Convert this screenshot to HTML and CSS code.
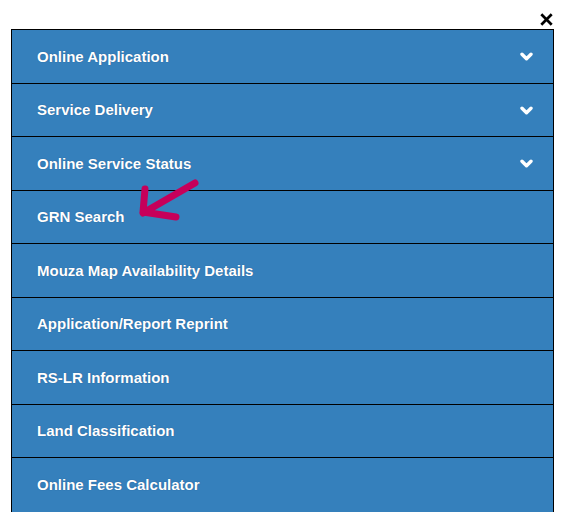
FILE: index.html
```html
<!DOCTYPE html>
<html lang="en">
<head>
<meta charset="utf-8">
<title>Menu</title>
<link rel="stylesheet" href="styles.css">
</head>
<body>
<div class="page">
  <div class="topbar">
    <button class="close" aria-label="Close">
      <svg width="13" height="13" viewBox="0 0 13 13"><path d="M1.3 1.3L11.7 11.7M11.7 1.3L1.3 11.7" stroke="#000" stroke-width="2.7" stroke-linecap="butt"/></svg>
    </button>
  </div>
  <ul class="menu">
    <li class="item"><span>Online Application</span><svg class="chev" width="13" height="10" viewBox="0 0 13 10"><polyline points="2,2.2 6.5,6.7 11,2.2" fill="none" stroke="#fff" stroke-width="3.4" stroke-linecap="round" stroke-linejoin="round"/></svg></li>
    <li class="item"><span>Service Delivery</span><svg class="chev" width="13" height="10" viewBox="0 0 13 10"><polyline points="2,2.2 6.5,6.7 11,2.2" fill="none" stroke="#fff" stroke-width="3.4" stroke-linecap="round" stroke-linejoin="round"/></svg></li>
    <li class="item"><span>Online Service Status</span><svg class="chev" width="13" height="10" viewBox="0 0 13 10"><polyline points="2,2.2 6.5,6.7 11,2.2" fill="none" stroke="#fff" stroke-width="3.4" stroke-linecap="round" stroke-linejoin="round"/></svg></li>
    <li class="item"><span>GRN Search</span></li>
    <li class="item"><span>Mouza Map Availability Details</span></li>
    <li class="item"><span>Application/Report Reprint</span></li>
    <li class="item"><span>RS-LR Information</span></li>
    <li class="item"><span>Land Classification</span></li>
    <li class="item"><span>Online Fees Calculator</span></li>
  </ul>
  <svg class="annot" width="72" height="52" viewBox="129 171 72 52"><path d="M195 183 L143 213 M145 189 L143 212 L176 217" fill="none" stroke="#c6005a" stroke-width="7" stroke-linecap="round" stroke-linejoin="round"/></svg>
</div>
</body>
</html>
```
FILE: styles.css
```css
html, body {
  margin: 0;
  padding: 0;
  background: #fff;
}
.page {
  position: relative;
  width: 561px;
  height: 522px;
  overflow: hidden;
  font-family: "Liberation Sans", Arial, sans-serif;
}
.topbar {
  height: 29px;
  display: flex;
  justify-content: flex-end;
  align-items: flex-start;
  padding-right: 8px;
  box-sizing: border-box;
}
.close {
  margin-top: 13px;
  padding: 0;
  border: 0;
  background: none;
  width: 13px;
  height: 13px;
  display: block;
}
.close svg { display: block; }
.menu {
  list-style: none;
  margin: 0 0 0 11px;
  padding: 0;
  width: 543px;
  box-sizing: border-box;
  border: 1px solid #000;
  border-bottom: 0;
  background: #3580bc;
}
.item {
  height: 52.5px;
  border-bottom: 1px solid #000;
  display: flex;
  align-items: center;
  justify-content: space-between;
  padding: 0 20px 0 25px;
  color: #fff;
  font-weight: bold;
  font-size: 15px;
  text-shadow: 0 0 1px rgba(10, 40, 90, 0.5);
}
.item:last-child {
  border-bottom: 0;
  height: 53.5px;
}
.chev {
  display: block;
  margin-top: 2px;
}
.annot {
  position: absolute;
  left: 129px;
  top: 171px;
}
```
